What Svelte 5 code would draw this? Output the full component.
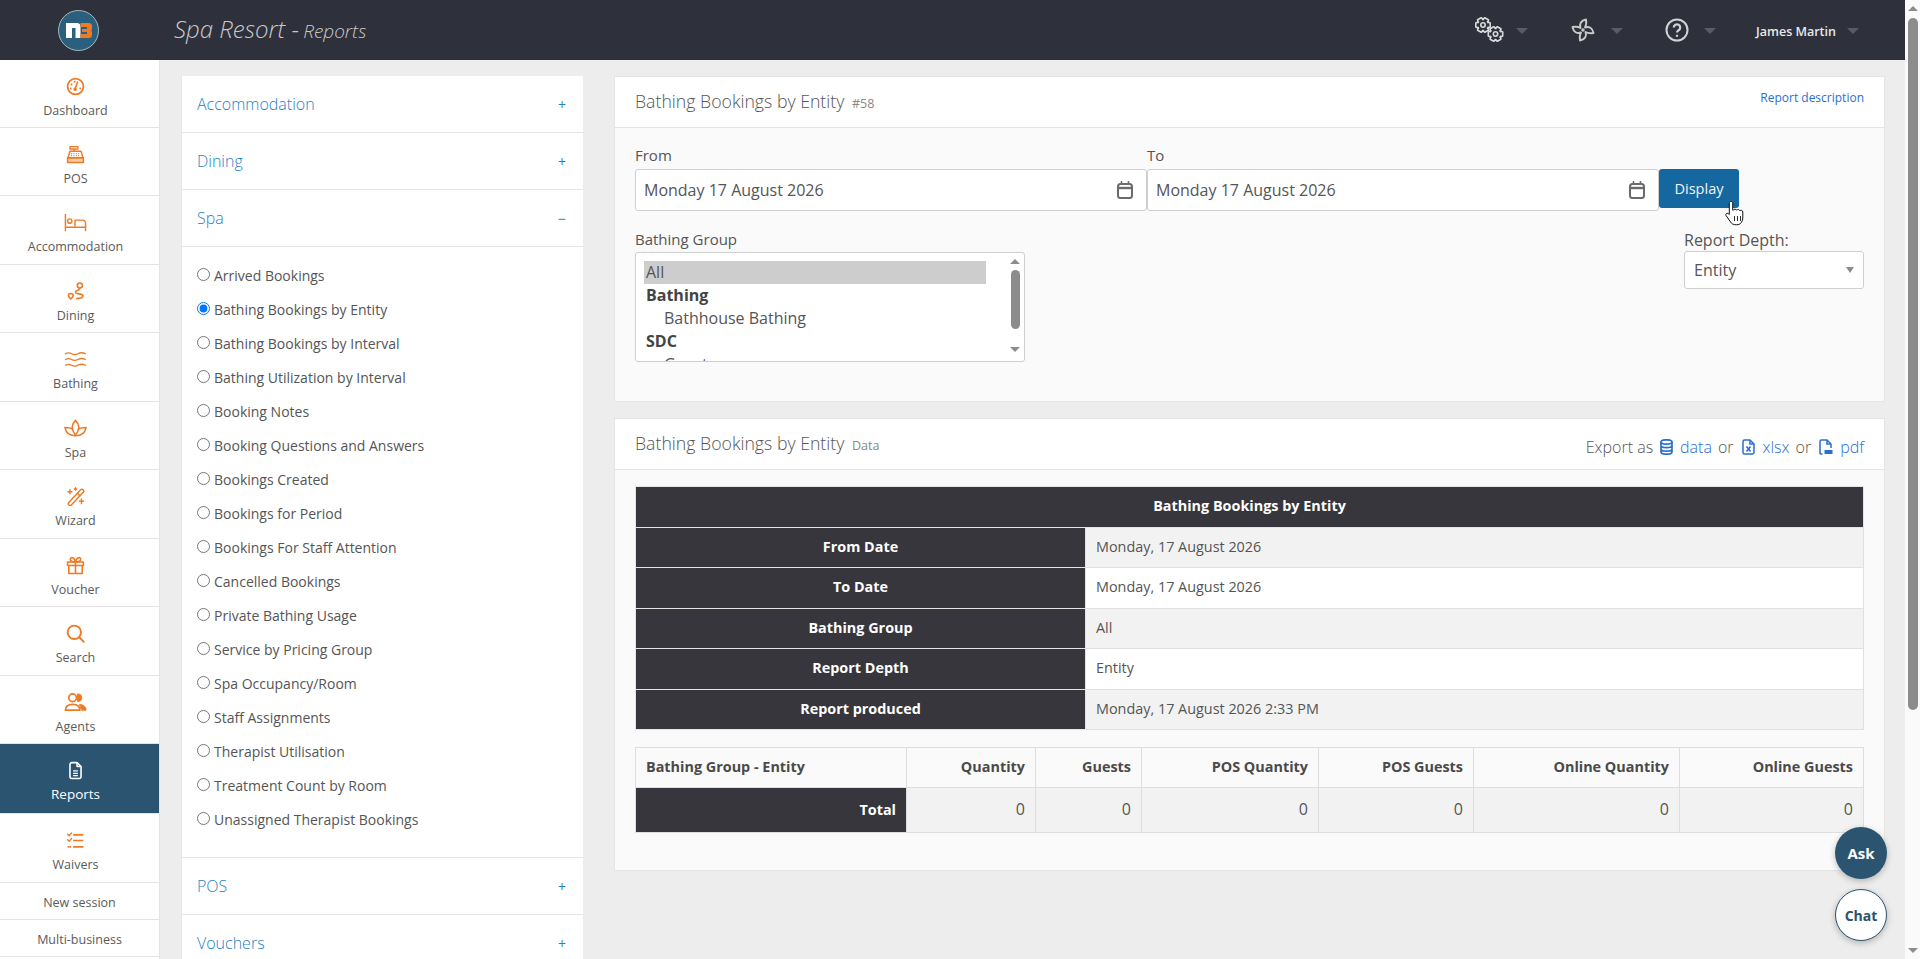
<script lang="ts">
	const nav = [
		{ label: 'Dashboard', h: 68, icon: 'dash' },
		{ label: 'POS', h: 68, icon: 'pos' },
		{ label: 'Accommodation', h: 69, icon: 'bed', wide: true },
		{ label: 'Dining', h: 68, icon: 'route' },
		{ label: 'Bathing', h: 69, icon: 'water', wide: true },
		{ label: 'Spa', h: 68, icon: 'spa', wide: true },
		{ label: 'Wizard', h: 69, icon: 'wand' },
		{ label: 'Voucher', h: 68, icon: 'gift' },
		{ label: 'Search', h: 69, icon: 'search' },
		{ label: 'Agents', h: 68, icon: 'users', wide: true },
		{ label: 'Reports', h: 70, icon: 'file', active: true },
		{ label: 'Waivers', h: 69, icon: 'list' }
	];

	const reports = [
		'Arrived Bookings',
		'Bathing Bookings by Entity',
		'Bathing Bookings by Interval',
		'Bathing Utilization by Interval',
		'Booking Notes',
		'Booking Questions and Answers',
		'Bookings Created',
		'Bookings for Period',
		'Bookings For Staff Attention',
		'Cancelled Bookings',
		'Private Bathing Usage',
		'Service by Pricing Group',
		'Spa Occupancy/Room',
		'Staff Assignments',
		'Therapist Utilisation',
		'Treatment Count by Room',
		'Unassigned Therapist Bookings'
	];

	let selected = $state('Bathing Bookings by Entity');

	const summary = [
		['From Date', 'Monday, 17 August 2026'],
		['To Date', 'Monday, 17 August 2026'],
		['Bathing Group', 'All'],
		['Report Depth', 'Entity'],
		['Report produced', 'Monday, 17 August 2026 2:33 PM']
	];

	const columns = ['Quantity', 'Guests', 'POS Quantity', 'POS Guests', 'Online Quantity', 'Online Guests'];

	// six tooth cog outline for the settings icon
	function cog(cx: number, cy: number, r_out: number, r_in: number) {
		let d = '';
		for (let i = 0; i < 6; i++) {
			const a = (i * Math.PI) / 3;
			const pts = [
				[a - 0.62, r_in],
				[a - 0.28, r_out],
				[a + 0.28, r_out],
				[a + 0.62, r_in]
			];
			for (const [t, r] of pts) {
				const x = (cx + r * Math.cos(t)).toFixed(2);
				const y = (cy + r * Math.sin(t)).toFixed(2);
				d += (d ? 'L' : 'M') + x + ' ' + y;
			}
		}
		return d + 'Z';
	}
</script>

{#snippet nav_icon(name: string, wide?: boolean)}
	<svg class="nav_icon" class:wide viewBox="0 0 24 24" fill="none" stroke="currentColor" stroke-width="2" stroke-linecap="round" stroke-linejoin="round">
		{#if name === 'dash'}
			<circle cx="12" cy="12" r="10" stroke-width="2.200" />
			<path d="M11.500 15 14.500 6.500" />
			<circle cx="11.500" cy="15.500" r="1.200" fill="currentColor" />
			<path d="M6 14.500h.01M7 9.500h.01M11 6h.01M18 14.500h.01" stroke-width="2.400" />
		{:else if name === 'pos'}
			<path d="M5 2h10v3H5zM10 5v3" stroke-width="1.700" />
			<path d="M5 8h14l2.500 8h-19z" stroke-width="1.800" />
			<path d="M7 11h.01M10 11h.01M13 11h.01M16 11h.01M7 13.500h.01M10 13.500h.01M13 13.500h.01M16 13.500h.01" stroke-width="1.600" />
			<path d="M2 16h20v6H2z" fill="currentColor" fill-opacity="0.4" stroke-width="1.800" />
		{:else if name === 'bed'}
			<path d="M1.500 3v18M22.500 21v-8a3.500 3.500 0 0 0-3.500-3.500h-7.500V16M1.500 17h21" stroke-width="1.500" stroke-linecap="butt" />
			<circle cx="6" cy="10.500" r="2.300" stroke-width="1.500" />
		{:else if name === 'route'}
			<path d="M3 17.500c0-1.800 1.500-3 3-3s3 1.200 3 3c0 1.500-3 4-3 4s-3-2.500-3-4z" />
			<circle cx="17.500" cy="4.500" r="3.200" />
			<path d="M17 8.500c-.5 2.500-5 1.500-5 4.500 0 3 9.500 1 9.500 4.500 0 3.500-5 3.500-8 3.500" />
		{:else if name === 'water'}
			<path d="M1.500 6c2.500-1.500 4-1.500 6.500 0s4 1.500 6.500 0 5-1.500 8 0M1.500 12c2.500-1.500 4-1.500 6.500 0s4 1.500 6.500 0 5-1.500 8 0M1.500 18c2.500-1.500 4-1.500 6.500 0s4 1.500 6.500 0 5-1.500 8 0" stroke-width="1.400" />
		{:else if name === 'spa'}
			<path d="M12 3.500c-2 2-3.500 4.500-3.500 7 0 3 1.500 6 3.500 8.500 2-2.500 3.500-5.500 3.500-8.500 0-2.500-1.500-5-3.500-7z" stroke-width="1.600" />
			<path d="M12 19.500c-5.500 0-10-3-11-8.500 2.500 0 5.500 0 7.500 1.500M12 19.500c5.500 0 10-3 11-8.500-2.500 0-5.500 0-7.500 1.500" stroke-width="1.600" />
		{:else if name === 'wand'}
			<path d="M3.500 19.500 18.500 3.500a2.300 2.300 0 0 1 3.300 3.200L7 22.500a2.300 2.300 0 0 1-3.500-3z" stroke-width="1.800" />
			<path d="M14.500 8l3 3" stroke-width="1.800" />
			<path d="M5 3.500v5M2.500 6h5M12 1v3M10.500 2.500h3M19.500 15v6M17 18h5" stroke-width="1.800" />
		{:else if name === 'gift'}
			<path d="M2 7.500h20v4.500H2zM3.500 12h17v10h-17zM12 7.500V22" />
			<path d="M12 7.500c-2 0-6.500-.5-6.500-3.500C5.500 1 10.500 1 12 7.500zM12 7.500c2 0 6.500-.5 6.500-3.500C18.500 1 13.500 1 12 7.500z" />
		{:else if name === 'search'}
			<circle cx="10.500" cy="10.500" r="8.500" stroke-width="2.400" />
			<path d="M17 17l5.500 5.500" stroke-width="2.400" />
		{:else if name === 'users'}
			<circle cx="9" cy="7" r="4" stroke-width="1.800" />
			<path d="M1.500 20c0-4 3-6 7.500-6s7.500 2 7.500 6z" stroke-width="1.800" />
			<path d="M14.500 3a4 4 0 0 1 0 8z" fill="currentColor" stroke-width="1" />
			<path d="M16.500 14c4 .3 6.500 2.500 6.500 6h-4.500z" fill="currentColor" stroke-width="1" />
		{:else if name === 'file'}
			<path d="M5 4.500A2.500 2.500 0 0 1 7.500 2H14l5 5v12.500a2.500 2.500 0 0 1-2.500 2.500h-9A2.500 2.500 0 0 1 5 19.500z" />
			<path d="M14 2.500V7h4.500" />
			<path d="M9 12.500h6M9 15.500h6M9 18.500h6" stroke-width="1.600" stroke-linecap="butt" />
		{:else if name === 'list'}
			<path d="M9 5h13M9 12h13M9 20h13" stroke-width="2.200" stroke-linecap="butt" />
			<path d="M2 4l2 2 3-3.500M2 11l2 2 3-3.500" stroke-width="1.700" />
			<path d="M3 20h.5M5.500 20h.01" stroke-width="2.400" />
		{/if}
	</svg>
{/snippet}

{#snippet calendar()}
	<svg class="calendar" viewBox="0 0 16 18" fill="none" stroke="#6b6b6b" stroke-width="2">
		<rect x="1" y="3" width="14" height="14" rx="2.500" />
		<path d="M1 7h14" stroke-width="2.400" />
		<path d="M4.500 0v3M11.500 0v3" stroke-width="1.600" />
	</svg>
{/snippet}

<div class="page">
	<header class="top_bar">
		<div class="logo_cell">
			<svg class="logo" width="41" height="41" viewBox="0 0 41 41">
				<circle cx="20.500" cy="20.500" r="20" fill="#2a5f7d" stroke="#c9d2d8" stroke-width="0.800" />
				<path d="M8 13h11a3.500 3.500 0 0 1 3.500 3.500V28h-5V18h-3.500v10H8z" fill="#fff" />
				<path d="M22.500 13h8.500a3 3 0 0 1 3 3v3c0 .8-.4 1.200-1.200 1.500.8.300 1.200.7 1.200 1.500v3a3 3 0 0 1-3 3h-8.500v-4h6.500v-2h-5v-3h5v-2h-6.500z" fill="#ee7a24" />
			</svg>
		</div>
		<div class="app_title"><span class="app_name">Spa Resort -</span> <span class="app_page">Reports</span></div>
		<div class="top_actions">
			<div class="top_item gears">
				<svg width="30" height="26" viewBox="0 0 30 26" fill="none" stroke="#dadada" stroke-width="1.600" stroke-linejoin="round">
					<path d={cog(9, 8, 7.500, 5.500)} />
					<circle cx="9" cy="8" r="2.200" />
					<path d={cog(21.500, 17, 7.500, 5.500)} />
					<circle cx="21.500" cy="17" r="2.200" />
				</svg>
				<span class="caret"></span>
			</div>
			<div class="top_item pinwheel">
				<svg width="24" height="24" viewBox="0 0 24 24" fill="none" stroke="#c8c8c8" stroke-width="1.900" stroke-linejoin="round">
					<path d="M9.500 10C8 6 10 2.500 15 1.500 15.500 4.500 15.500 7 14 9.500 18 8 21.500 10 22.500 15 19.500 15.500 17 15.500 14.500 14 16 18 14 21.500 9 22.500 8.500 19.500 8.500 17 10 14.500 6 16 2.500 14 1.500 9 4.500 8.500 7 8.500 9.500 10z" />
					<circle cx="12" cy="12" r="0.800" fill="#c8c8c8" />
				</svg>
				<span class="caret"></span>
			</div>
			<div class="top_item help">
				<svg width="24" height="24" viewBox="0 0 24 24" fill="none" stroke="#d2d2d2" stroke-width="2">
					<circle cx="12" cy="12" r="10.500" />
					<path d="M8.800 9.500a3.200 3.200 0 1 1 4.800 2.800c-1 .6-1.600 1.200-1.600 2.200" stroke-width="2.200" />
					<path d="M12 16.800v2" stroke-width="2.200" />
				</svg>
				<span class="caret"></span>
			</div>
			<div class="top_item user">
				<span class="user_name">James Martin</span>
				<span class="caret"></span>
			</div>
		</div>
	</header>

	<div class="body_row">
		<nav class="side_nav">
			{#each nav as item}
				<div class="nav_item" class:active={item.active} style="height: {item.h}px">
					{@render nav_icon(item.icon, item.wide)}
					<span>{item.label}</span>
				</div>
			{/each}
			<div class="nav_small">New session</div>
			<div class="nav_small">Multi-business</div>
		</nav>

		<aside class="accordion">
			<div class="acc_head"><span>Accommodation</span><b>+</b></div>
			<div class="acc_head"><span>Dining</span><b>+</b></div>
			<div class="acc_head"><span>Spa</span><b>−</b></div>
			<div class="acc_body">
				{#each reports as report}
					<label class="radio_row">
						<input type="radio" name="report" value={report} bind:group={selected} />
						<span>{report}</span>
					</label>
				{/each}
			</div>
			<div class="acc_head"><span>POS</span><b>+</b></div>
			<div class="acc_head"><span>Vouchers</span><b>+</b></div>
		</aside>

		<main class="content">
			<section class="panel filter_panel">
				<div class="panel_head">
					<h2>Bathing Bookings by Entity <small>#58</small></h2>
					<a class="description" href="#top">Report description</a>
				</div>
				<div class="filter_body">
					<div class="date_row">
						<div class="date_field">
							<label for="from_date">From</label>
							<div class="date_input" id="from_date">Monday 17 August 2026{@render calendar()}</div>
						</div>
						<div class="date_field">
							<label for="to_date">To</label>
							<div class="date_input" id="to_date">Monday 17 August 2026{@render calendar()}</div>
						</div>
						<button class="display_btn">Display</button>
					</div>
					<div class="select_row">
						<div class="group_field">
							<div class="field_label">Bathing Group</div>
							<div class="list_box">
								<div class="list_rows">
									<div class="opt selected">All</div>
									<div class="optgroup">Bathing</div>
									<div class="opt child">Bathhouse Bathing</div>
									<div class="optgroup">SDC</div>
									<div class="opt child">Guest</div>
								</div>
								<div class="list_scroll">
									<span class="arrow_up"></span>
									<span class="list_thumb"></span>
									<span class="arrow_down"></span>
								</div>
							</div>
						</div>
						<div class="depth_field">
							<div class="field_label depth_label">Report Depth:</div>
							<div class="depth_select">Entity<span class="depth_caret"></span></div>
						</div>
					</div>
				</div>
			</section>

			<section class="panel data_panel">
				<div class="panel_head">
					<h2>Bathing Bookings by Entity <small>Data</small></h2>
					<div class="export">
						<span>Export as</span>
						<svg class="export_icon first_icon" viewBox="0 0 14 16" fill="none" stroke="#2a6fd0" stroke-width="1.700">
							<ellipse cx="7" cy="3" rx="5.500" ry="2.200" />
							<path d="M1.500 3v10c0 1.200 2.500 2.200 5.500 2.200s5.500-1 5.500-2.200V3M1.500 6.500c0 1.200 2.500 2.200 5.500 2.200s5.500-1 5.500-2.200M1.500 10c0 1.200 2.500 2.200 5.500 2.200s5.500-1 5.500-2.200" />
						</svg>
						<a href="#top">data</a>
						<span>or</span>
						<svg class="export_icon" viewBox="0 0 14 16" fill="none" stroke="#2a6fd0" stroke-width="1.500">
							<path d="M1.500 2.500a1.500 1.500 0 0 1 1.500-1.500h5.500l4 4v8.500a1.500 1.500 0 0 1-1.500 1.500H3a1.500 1.500 0 0 1-1.500-1.500z" />
							<path d="M8.500 1v4h4" />
							<path d="M5 7.500l4 5M9 7.500l-4 5" stroke-width="1.600" />
						</svg>
						<a href="#top">xlsx</a>
						<span>or</span>
						<svg class="export_icon" viewBox="0 0 14 16" fill="none" stroke="#2a6fd0" stroke-width="1.500">
							<path d="M1.500 15V2.500A1.500 1.500 0 0 1 3 1h5.500l4 4v4M1.500 15H4" />
							<path d="M8.500 1v4h4" />
							<path d="M6 11h8v4H6z" fill="#2a6fd0" stroke="none" />
						</svg>
						<a href="#top">pdf</a>
					</div>
				</div>
				<div class="data_body">
					<table class="summary">
						<colgroup>
							<col class="label_col" />
							<col />
						</colgroup>
						<thead>
							<tr><th colspan="2">Bathing Bookings by Entity</th></tr>
						</thead>
						<tbody>
							{#each summary as row}
								<tr>
									<th>{row[0]}</th>
									<td>{row[1]}</td>
								</tr>
							{/each}
						</tbody>
					</table>
					<table class="totals">
						<thead>
							<tr>
								<th class="first">Bathing Group - Entity</th>
								{#each columns as col}
									<th>{col}</th>
								{/each}
							</tr>
						</thead>
						<tbody>
							<tr>
								<th class="total">Total</th>
								{#each columns as col}
									<td>0</td>
								{/each}
							</tr>
						</tbody>
					</table>
				</div>
			</section>
		</main>
	</div>

	<div class="page_scroll">
		<span class="arrow_up"></span>
		<span class="page_thumb"></span>
		<span class="arrow_down"></span>
	</div>

	<button class="float_btn ask">Ask</button>
	<button class="float_btn chat">Chat</button>

	<svg class="hand_cursor" width="20" height="26" viewBox="0 0 20 26">
		<path d="M6 1.500c1 0 1.700.7 1.700 1.700v7l1-.2c0-1 2.300-1.200 2.600 0l.7.100c.4-1 2.300-.8 2.600.4l.6.100c.6-.7 2.600-.4 2.600 1.400v6c0 3-2 6-4 6.500-3 .6-6 .2-7.500-1.500L1 15.500c-.8-1 .4-3 2.400-1.800l.9.800V3.200c0-1 .7-1.700 1.700-1.700z" fill="#fff" stroke="#111" stroke-width="1" stroke-linejoin="round" />
		<path d="M9.500 16v5M12.500 16v5M15.500 16v5" stroke="#111" stroke-width="0.900" />
	</svg>
</div>

<style>
	:global(body) {
		margin: 0;
		background: #ededed;
		font-family: 'Open Sans', sans-serif;
		color: #4a4a4a;
	}

	.page {
		position: relative;
		width: 1920px;
		height: 959px;
		overflow: hidden;
		background: #ededed;
	}

	.top_bar {
		display: flex;
		align-items: center;
		height: 60px;
		width: 1905px;
		background: #2e303c;
		color: #d8d8d8;
	}

	.logo_cell {
		width: 157px;
		display: flex;
		justify-content: center;
	}

	.app_title {
		margin-left: 17px;
		font-style: italic;
		color: #c9c9c9;
		margin-top: -3px;
	}

	.app_name {
		font-size: 24px;
		font-weight: 300;
	}

	.app_page {
		font-size: 19px;
		font-weight: 300;
	}

	.top_actions {
		margin-left: auto;
		display: flex;
		align-items: center;
		margin-right: 46px;
	}

	.top_item {
		display: flex;
		align-items: center;
		gap: 12px;
	}

	.gears {
		margin-right: 43px;
	}

	.pinwheel {
		margin-right: 42px;
		gap: 16px;
	}

	.help {
		margin-right: 40px;
		gap: 15px;
	}

	.user {
		gap: 11px;
	}

	.user_name {
		font-size: 12.500px;
		font-weight: 600;
		color: #e8e8e8;
		margin-top: 2px;
	}

	.caret {
		width: 0;
		height: 0;
		border-left: 6px solid transparent;
		border-right: 6px solid transparent;
		border-top: 6px solid #5b5c63;
		margin-top: 2px;
	}

	.body_row {
		display: flex;
		align-items: flex-start;
		width: 1905px;
	}

	.side_nav {
		flex: none;
		width: 159px;
		background: #fff;
		border-right: 1px solid #e4e4e4;
		height: 899px;
		overflow: hidden;
	}

	.nav_item {
		display: flex;
		flex-direction: column;
		align-items: center;
		box-sizing: border-box;
		border-bottom: 1px solid #e6e2e6;
		color: #ee7a24;
		padding: 17px 8px 0 0;
	}

	.nav_item span {
		color: #5a5a5a;
		font-size: 12.500px;
		line-height: 17px;
		margin-top: 6px;
	}

	.nav_icon {
		width: 19px;
		height: 19px;
		flex: none;
	}

	.nav_icon.wide {
		width: 23px;
		height: 23px;
		margin: -2px 0;
	}

	.nav_item.active {
		background: #2a5470;
		color: #fff;
	}

	.nav_item.active span {
		color: #fff;
		font-size: 13.500px;
	}

	.nav_small {
		height: 37px;
		box-sizing: border-box;
		border-bottom: 1px solid #e6e2e6;
		display: flex;
		align-items: center;
		justify-content: center;
		font-size: 12.500px;
		color: #5a5a5a;
		padding-top: 2px;
	}

	.accordion {
		flex: none;
		width: 402px;
		margin: 16px 0 0 21px;
		background: #fff;
		border-left: 1px solid #e6e6e6;
		box-sizing: border-box;
		height: 900px;
	}

	.acc_head {
		display: flex;
		align-items: center;
		justify-content: space-between;
		height: 57px;
		box-sizing: border-box;
		padding: 0 17px 0 15px;
		border-bottom: 1px solid #e6e6e6;
		color: #1f7fc4;
		font-size: 16px;
		font-weight: 300;
	}

	.acc_head b {
		font-weight: 400;
		font-size: 14px;
	}

	.acc_body {
		padding: 11px 15px 0;
		height: 611px;
		box-sizing: border-box;
		border-bottom: 1px solid #e6e6e6;
	}

	.radio_row {
		display: flex;
		align-items: center;
		height: 34px;
		font-size: 14px;
		color: #555;
	}

	.radio_row input {
		margin: 0 4px 2px 0;
		width: 13px;
		height: 13px;
		flex: none;
	}

	.content {
		flex: 1;
		min-width: 0;
		padding: 16px 20px 0 31px;
		display: flex;
		flex-direction: column;
		gap: 16px;
	}

	.panel {
		background: #fafafa;
		border: 1px solid #e4e4e4;
		box-sizing: border-box;
	}

	.panel_head {
		display: flex;
		justify-content: space-between;
		background: #fff;
		border-bottom: 1px solid #e4e4e4;
		height: 51px;
		box-sizing: border-box;
		padding: 12px 20px 0;
	}

	h2 {
		margin: 0;
		font-size: 17.700px;
		font-weight: 300;
		color: #555;
		line-height: 24px;
	}

	h2 small {
		font-size: 12.500px;
		color: #888;
		font-weight: 400;
		margin-left: 3px;
	}

	.description {
		font-size: 12px;
		color: #2a6fd0;
		text-decoration: none;
		line-height: 16px;
		margin-top: 1px;
	}

	.filter_panel {
		height: 326px;
	}

	.filter_body {
		padding: 19px 20px 0;
	}

	.date_row {
		display: flex;
		align-items: flex-start;
	}

	.date_field {
		width: 512px;
	}

	.date_field label,
	.field_label {
		display: block;
		font-size: 15px;
		line-height: 19px;
		color: #555;
		margin-bottom: 3px;
	}

	.date_field label {
		line-height: 17px;
		margin-bottom: 5px;
	}

	.date_input {
		display: flex;
		align-items: center;
		justify-content: space-between;
		height: 42px;
		box-sizing: border-box;
		border: 1px solid #cfcfcf;
		border-radius: 3px;
		background: #fff;
		padding: 0 13px 0 8px;
		font-size: 16px;
		color: #555;
	}

	.calendar {
		width: 16px;
		height: 18px;
	}

	.display_btn {
		margin-top: 22px;
		width: 80px;
		height: 39px;
		background: #15689f;
		color: #f2f2f2;
		border: none;
		border-radius: 3px;
		font-family: inherit;
		font-size: 14.500px;
		font-weight: 400;
	}

	.select_row {
		display: flex;
		justify-content: space-between;
		margin-top: 19px;
	}

	.group_field {
		width: 390px;
	}

	.list_box {
		display: flex;
		height: 110px;
		width: 390px;
		box-sizing: border-box;
		border: 1px solid #cfcfcf;
		border-radius: 3px;
		background: #fff;
		overflow: hidden;
	}

	.list_rows {
		flex: 1;
		padding: 8px 22px 0 8px;
		font-size: 16px;
		line-height: 23px;
		color: #555;
		overflow: hidden;
	}

	.opt {
		padding-left: 2px;
	}

	.opt.selected {
		background: #cdcdcd;
	}

	.opt.child {
		padding-left: 20px;
	}

	.optgroup {
		font-weight: 700;
		padding-left: 2px;
		color: #444;
	}

	.list_scroll {
		flex: none;
		width: 14px;
		margin-right: 2px;
		position: relative;
		display: flex;
		flex-direction: column;
		align-items: center;
	}

	.list_thumb {
		width: 9px;
		height: 59px;
		border-radius: 5px;
		background: #8c8c8c;
		margin-top: 6px;
	}

	.arrow_up,
	.arrow_down {
		width: 0;
		height: 0;
		border-left: 5px solid transparent;
		border-right: 5px solid transparent;
		flex: none;
	}

	.arrow_up {
		border-bottom: 5px solid #8c8c8c;
		margin-top: 6px;
	}

	.arrow_down {
		border-top: 5px solid #8c8c8c;
		margin-top: 18px;
	}

	.depth_field {
		width: 180px;
	}

	.depth_label {
		font-size: 16px;
		margin-bottom: 1px;
		line-height: 20px;
	}

	.depth_select {
		position: relative;
		height: 38px;
		box-sizing: border-box;
		border: 1px solid #cfcfcf;
		border-radius: 3px;
		background: #fff;
		padding: 0 9px;
		display: flex;
		align-items: center;
		font-size: 16px;
		color: #555;
	}

	.depth_caret {
		position: absolute;
		right: 9px;
		top: 15px;
		width: 0;
		height: 0;
		border-left: 4px solid transparent;
		border-right: 4px solid transparent;
		border-top: 6px solid #8c8c8c;
	}

	.export {
		display: flex;
		align-items: center;
		gap: 6px;
		height: 26px;
		margin-top: 3px;
		font-size: 16px;
		font-weight: 300;
		color: #555;
	}

	.export a {
		color: #2a6fd0;
		text-decoration: none;
	}

	.export_icon {
		width: 15px;
		height: 16px;
		margin-left: 1px;
		margin-right: 1px;
	}

	.export_icon.first_icon {
		margin-left: 0;
		margin-right: 0;
	}

	.data_body {
		padding: 16px 20px 0 20px;
		height: 400px;
		box-sizing: border-box;
	}

	table {
		border-collapse: collapse;
		width: 100%;
		font-size: 14.400px;
	}

	.summary {
		table-layout: fixed;
		background: #fff;
	}

	.label_col {
		width: 450px;
	}

	.summary th {
		background: #36363c;
		color: #fff;
		font-weight: 700;
		text-align: center;
		height: 37.500px;
		padding: 0 0 2px;
		border: 1px solid #e4e4e4;
	}

	.summary td {
		height: 37.500px;
		padding: 0 10px 2px;
		border: 1px solid #e0e0e0;
		color: #555;
	}

	.summary tbody tr:nth-child(odd) td {
		background: #f2f2f2;
	}

	.totals {
		margin-top: 17px;
		table-layout: fixed;
	}

	.totals th,
	.totals td {
		border: 1px solid #dedede;
		text-align: right;
		padding: 0 10px 2px;
	}

	.totals thead th {
		height: 37px;
		color: #4a4a4a;
		font-weight: 700;
		background: #fafafa;
	}

	.totals th.first {
		text-align: left;
		width: 250px;
	}

	.totals thead th:nth-child(2) {
		width: 108px;
	}

	.totals thead th:nth-child(3) {
		width: 85px;
	}

	.totals thead th:nth-child(4) {
		width: 156px;
	}

	.totals thead th:nth-child(5) {
		width: 134px;
	}

	.totals thead th:nth-child(6) {
		width: 185px;
	}

	.totals tbody td,
	.totals tbody th {
		height: 42px;
	}

	.totals tbody td {
		background: #f2f2f2;
		font-size: 16px;
		color: #555;
	}

	.totals th.total {
		background: #36363c;
		color: #fff;
	}

	.page_scroll {
		position: absolute;
		top: 0;
		right: 0;
		width: 15px;
		height: 959px;
		background: #fafafa;
		display: flex;
		flex-direction: column;
		align-items: center;
	}

	.page_thumb {
		width: 10px;
		height: 692px;
		background: #8c8c8c;
		border-radius: 5px;
		margin-top: 7px;
	}

	.page_scroll .arrow_down {
		position: absolute;
		bottom: 6px;
		margin: 0;
	}

	.float_btn {
		position: absolute;
		left: 1835px;
		width: 52px;
		height: 52px;
		border-radius: 50%;
		font-family: inherit;
		font-weight: 700;
		font-size: 14px;
		box-shadow: 0 2px 6px rgba(0, 0, 0, 0.25);
		padding: 0;
	}

	.ask {
		top: 827px;
		background: #2a5470;
		color: #fff;
		border: none;
		font-size: 15px;
	}

	.chat {
		top: 889px;
		background: #fff;
		color: #2a5470;
		border: 1px solid #2a5470;
	}

	.hand_cursor {
		position: absolute;
		left: 1725px;
		top: 200px;
	}
</style>
